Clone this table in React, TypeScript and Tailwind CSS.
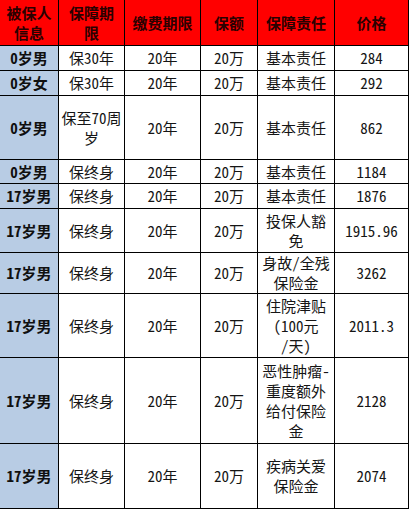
const header = ["被保人\n信息", "保障期\n限", "缴费期限", "保额", "保障责任", "价格"];

const rows = [
  ["0岁男", "保30年", "20年", "20万", "基本责任", "284"],
  ["0岁女", "保30年", "20年", "20万", "基本责任", "292"],
  ["0岁男", "保至70周\n岁", "20年", "20万", "基本责任", "862"],
  ["0岁男", "保终身", "20年", "20万", "基本责任", "1184"],
  ["17岁男", "保终身", "20年", "20万", "基本责任", "1876"],
  ["17岁男", "保终身", "20年", "20万", "投保人豁\n免", "1915.96"],
  ["17岁男", "保终身", "20年", "20万", "身故/全残\n保险金", "3262"],
  ["17岁男", "保终身", "20年", "20万", "住院津贴\n(100元\n/天)", "2011.3"],
  ["17岁男", "保终身", "20年", "20万", "恶性肿瘤-\n重度额外\n给付保险\n金", "2128"],
  ["17岁男", "保终身", "20年", "20万", "疾病关爱\n保险金", "2074"],
];

const cell =
  "flex items-center justify-center text-center whitespace-pre-line border-r border-b border-black leading-[20px]";

export default function App() {
  return (
    <div className="w-[409px] h-[510px] bg-white overflow-hidden">
      <div
        className="grid grid-cols-[59px_66px_76px_57px_77px_74px] grid-rows-[46px_25px_25px_64px_24px_25px_44px_41px_64px_86px_65px] text-[15px]"
        style={{ fontFamily: '"Noto Sans Mono CJK SC", "Noto Sans CJK SC", sans-serif' }}
      >
        {header.map((h, i) => (
          <div key={i} className={`${cell} bg-[#ff0000] font-bold text-[#2a0000]`}>
            {h}
          </div>
        ))}
        {rows.map((r, ri) =>
          r.map((v, ci) => (
            <div
              key={`${ri}-${ci}`}
              className={
                ci === 0
                  ? `${cell} bg-[#b8cce4] font-bold text-[#101010]`
                  : `${cell} bg-white text-[#151515]`
              }
            >
              {v}
            </div>
          ))
        )}
      </div>
    </div>
  );
}
